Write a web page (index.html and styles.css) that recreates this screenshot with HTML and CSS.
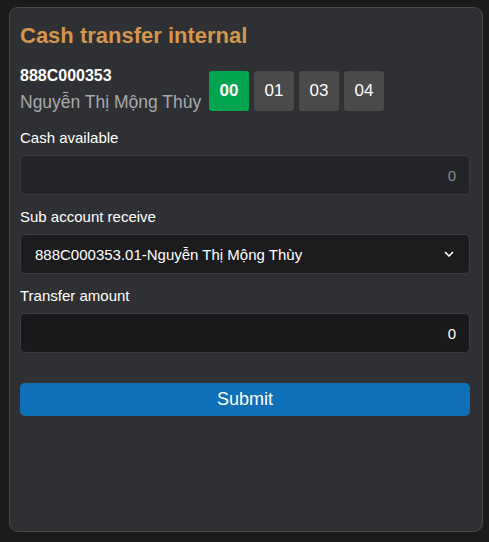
FILE: index.html
```html
<!DOCTYPE html>
<html>
<head>
<meta charset="utf-8">
<link rel="stylesheet" href="styles.css">
</head>
<body>
<div class="card">
  <h1 class="title">Cash transfer internal</h1>
  <div class="account">
    <div class="account-info">
      <div class="account-no">888C000353</div>
      <div class="account-name">Nguyễn Thị Mộng Thùy</div>
    </div>
    <div class="tabs">
      <div class="tab active">00</div>
      <div class="tab">01</div>
      <div class="tab">03</div>
      <div class="tab">04</div>
    </div>
  </div>
  <div class="field field-first">
    <div class="label">Cash available</div>
    <div class="input readonly">0</div>
  </div>
  <div class="field">
    <div class="label">Sub account receive</div>
    <div class="input select">
      <span>888C000353.01-Nguyễn Thị Mộng Thùy</span>
      <svg class="chev" width="10" height="6" viewBox="0 0 10 6"><path d="M1 1 L5 5 L9 1" fill="none" stroke="#fff" stroke-width="1.6"/></svg>
    </div>
  </div>
  <div class="field">
    <div class="label">Transfer amount</div>
    <div class="input amount">0</div>
  </div>
  <button class="submit">Submit</button>
</div>
</body>
</html>
```
FILE: styles.css
```css
html, body {
  margin: 0;
  padding: 0;
  background: #1b1b1b;
  font-family: "Liberation Sans", Arial, sans-serif;
  color: #fff;
}
body {
  padding: 7px 7px 10px 9px;
  height: 542px;
  box-sizing: border-box;
}
.card {
  box-sizing: border-box;
  width: 474px;
  height: 525px;
  background: #2f3034;
  border: 1px solid #4a4b4e;
  border-radius: 9px;
  padding: 14px 12px 0 10px;
}
.title {
  margin: 0;
  font-size: 22px;
  line-height: 28px;
  font-weight: bold;
  color: #d4964b;
}
.account {
  display: flex;
  align-items: flex-start;
  margin-top: 17px;
}
.account-info {
  width: 189px;
}
.account-no {
  font-size: 16px;
  font-weight: bold;
  line-height: 18px;
}
.account-name {
  font-size: 17.5px;
  line-height: 22px;
  color: #a6a9ae;
  margin-top: 6px;
}
.tabs {
  display: flex;
  gap: 5px;
  margin-top: 4px;
}
.tab {
  width: 40px;
  height: 40px;
  border-radius: 3px;
  background: #4a4a4a;
  display: flex;
  align-items: center;
  justify-content: center;
  font-size: 17px;
}
.tab.active {
  background: #00a551;
  font-weight: bold;
}
.label {
  font-size: 15px;
  line-height: 18px;
  margin-top: 13px;
  margin-bottom: 8px;
}
.field-first .label { margin-top: 16px; }
.input {
  box-sizing: border-box;
  height: 40px;
  border-radius: 5px;
  border: 1px solid #3b3c40;
  display: flex;
  align-items: center;
  justify-content: flex-end;
  padding: 0 13px;
  font-size: 15px;
}
.readonly {
  background: #232427;
  color: #8a8c90;
}
.select {
  background: #1c1c1e;
  justify-content: space-between;
  padding: 0 15px 0 14px;
}
.amount {
  background: #19191b;
}
.submit {
  display: block;
  width: 100%;
  height: 33px;
  margin-top: 30px;
  border: none;
  border-radius: 5px;
  background: #0f6fb7;
  color: #fff;
  font-family: "Liberation Sans", Arial, sans-serif;
  font-size: 18px;
}
```
